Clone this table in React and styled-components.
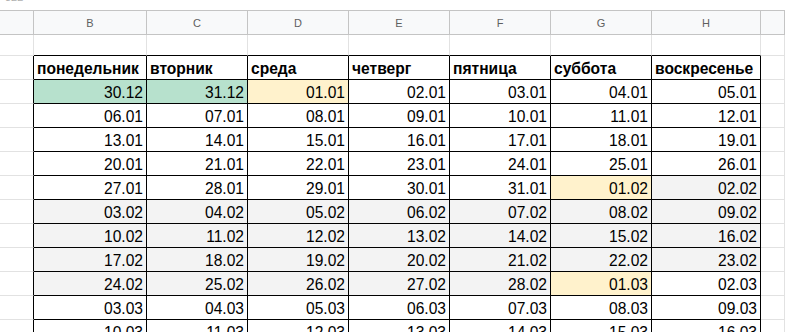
import React from "react";
import styled, { createGlobalStyle } from "styled-components";

const GlobalStyle = createGlobalStyle`
  html, body {
    margin: 0;
    padding: 0;
    background: #fff;
    overflow: hidden;
  }
  body {
    font-family: "Liberation Sans", Arial, sans-serif;
  }
`;

const COLS = "34px 113px 101px 101px 101px 101px 101px 109px 1fr";
const GRID = "#e2e2e2";
const HEAD_LINE = "#c4c4c4";
const INK = "#000";

const letters = ["B", "C", "D", "E", "F", "G", "H"];
const days = [
  "понедельник",
  "вторник",
  "среда",
  "четверг",
  "пятница",
  "суббота",
  "воскресенье",
];

const dates = [
  ["30.12", "31.12", "01.01", "02.01", "03.01", "04.01", "05.01"],
  ["06.01", "07.01", "08.01", "09.01", "10.01", "11.01", "12.01"],
  ["13.01", "14.01", "15.01", "16.01", "17.01", "18.01", "19.01"],
  ["20.01", "21.01", "22.01", "23.01", "24.01", "25.01", "26.01"],
  ["27.01", "28.01", "29.01", "30.01", "31.01", "01.02", "02.02"],
  ["03.02", "04.02", "05.02", "06.02", "07.02", "08.02", "09.02"],
  ["10.02", "11.02", "12.02", "13.02", "14.02", "15.02", "16.02"],
  ["17.02", "18.02", "19.02", "20.02", "21.02", "22.02", "23.02"],
  ["24.02", "25.02", "26.02", "27.02", "28.02", "01.03", "02.03"],
  ["03.03", "04.03", "05.03", "06.03", "07.03", "08.03", "09.03"],
  ["10.03", "11.03", "12.03", "13.03", "14.03", "15.03", "16.03"],
];

// g = green, y = yellow, s = grey
const fills = [
  "ggy....",
  ".......",
  ".......",
  ".......",
  ".....ys",
  "sssssss",
  "sssssss",
  "sssssss",
  "sssssy.",
  ".......",
  ".......",
];

const fillColor = {
  g: "#b7e1cd",
  y: "#fff2cc",
  s: "#f3f3f3",
  ".": "#fff",
};

const TopStrip = styled.div`
  height: 10px;
  overflow: hidden;
  padding-left: 5px;
  font-size: 11px;
  line-height: 11px;
  color: #b0b0b0;
  span {
    display: block;
    margin-top: -8px;
  }
`;

const Row = styled.div`
  display: grid;
  grid-template-columns: ${COLS};
  height: ${({ $h }) => $h}px;
  border-top: ${({ $top }) => ($top ? `1px solid ${HEAD_LINE}` : "none")};
  background: ${({ $bg }) => $bg || "transparent"};
`;

const ColHead = styled.div`
  box-sizing: border-box;
  border-right: 1px solid ${HEAD_LINE};
  border-bottom: 1px solid ${HEAD_LINE};
  background: #f8f9fa;
  color: #5f5f5f;
  font-size: 11px;
  display: flex;
  align-items: center;
  justify-content: center;
`;

const Cell = styled.div`
  box-sizing: border-box;
  border-right: 1px solid ${({ $inkRight }) => ($inkRight ? INK : GRID)};
  border-bottom: 1px solid ${({ $inkBottom }) => ($inkBottom ? INK : GRID)};
  background: ${({ $fill }) => $fill || "#fff"};
  display: flex;
  align-items: flex-end;
  justify-content: ${({ $right }) => ($right ? "flex-end" : "flex-start")};
  padding: 0 3px 2px 3px;
  font-size: 15.6px;
  line-height: 17px;
  font-weight: ${({ $bold }) => ($bold ? 700 : 400)};
  color: #000;
  white-space: nowrap;
  overflow: hidden;
`;

const App = () => {
  return (
    <>
      <GlobalStyle />
      <TopStrip>
        <span>322</span>
      </TopStrip>
      <Row $h={24} $top>
        <ColHead />
        {letters.map((l) => (
          <ColHead key={l}>{l}</ColHead>
        ))}
        <ColHead />
      </Row>
      <Row $h={21}>
        <Cell />
        {letters.map((l) => (
          <Cell key={l} $inkBottom />
        ))}
        <Cell />
      </Row>
      <Row $h={24}>
        <Cell $inkRight />
        {days.map((d) => (
          <Cell key={d} $inkRight $inkBottom $bold>
            {d}
          </Cell>
        ))}
        <Cell />
      </Row>
      {dates.map((row, r) => (
        <Row key={r} $h={24}>
          <Cell $inkRight />
          {row.map((v, c) => (
            <Cell
              key={c}
              $inkRight
              $inkBottom
              $right
              $fill={fillColor[fills[r][c]]}
            >
              {v}
            </Cell>
          ))}
          <Cell />
        </Row>
      ))}
    </>
  );
};

export default App;
